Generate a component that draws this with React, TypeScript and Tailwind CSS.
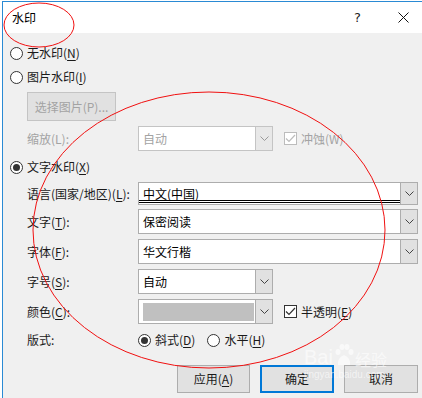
import React from "react";

const font = "font-['Noto_Sans_CJK_SC',sans-serif]";

function Chevron({ color = "#444" }: { color?: string }) {
    return (
        <svg width="9" height="5" viewBox="0 0 9 5">
            <path d="M0.5 0.5 L4.5 4.5 L8.5 0.5" stroke={color} fill="none" strokeWidth="1" />
        </svg>
    );
}

function Radio({ checked }: { checked?: boolean }) {
    return (
        <span className="w-[13px] h-[13px] rounded-full border border-[#333] bg-white flex items-center justify-center shrink-0">
            {checked && <span className="w-[7px] h-[7px] rounded-full bg-[#333]" />}
        </span>
    );
}

function Check({ disabled }: { disabled?: boolean }) {
    const c = disabled ? "#bcbcbc" : "#333";
    return (
        <span className={`w-[13px] h-[13px] border bg-white flex items-center justify-center shrink-0 ${disabled ? "border-[#bcbcbc]" : "border-[#333]"}`}>
            <svg width="11" height="9" viewBox="0 0 11 9">
                <path d="M1 4.5 L4 7.5 L10 1" stroke={c} fill="none" strokeWidth="1.2" />
            </svg>
        </span>
    );
}

function Combo({ w, h = 25, disabled, children }: { w: string; h?: number; disabled?: boolean; children?: React.ReactNode }) {
    return (
        <div
            className={`${w} flex border ${disabled ? "border-[#c4c4c4]" : "border-[#adadad]"} bg-white`}
            style={{ height: h }}
        >
            <div className="flex-1 relative flex items-center pl-[4px]">{children}</div>
            <div className={`w-[17px] border-l ${disabled ? "border-[#c4c4c4] bg-[#e8e8e8]" : "border-[#adadad] bg-[#e1e1e1]"} flex items-center justify-center`}>
                <Chevron color={disabled ? "#999" : "#444"} />
            </div>
        </div>
    );
}

function Label({ children }: { children: React.ReactNode }) {
    return <div className="w-[111px] text-[12px] leading-none text-[#1a1a1a]">{children}</div>;
}

export default function App() {
    return (
        <div className={`w-[422px] h-[398px] bg-white pl-[2px] pt-[1px] relative overflow-hidden ${font}`}>
            <div className="h-full border-l border-t border-[#2a8ad4] flex flex-col">
                {/* 标题栏 */}
                <div className="h-[31px] bg-white flex items-center pl-[9px] pr-[13px] shrink-0">
                    <span className="text-[12px] leading-none text-black">水印</span>
                    <span className="ml-auto text-[13px] leading-none text-[#222] font-['DejaVu_Sans',sans-serif]">?</span>
                    <svg className="ml-[37px]" width="11" height="11" viewBox="0 0 11 11">
                        <path d="M0.5 0.5 L10.5 10.5 M10.5 0.5 L0.5 10.5" stroke="#111" strokeWidth="1" />
                    </svg>
                </div>

                {/* 内容 */}
                <div className="flex-1 bg-[#f0f0f0] pl-[7px] pt-[8px] text-[12px] leading-none text-[#1a1a1a]">
                    <div className="h-[24px] flex items-center gap-[4px]">
                        <Radio />
                        <span>无水印(<u className="underline-offset-2">N</u>)</span>
                    </div>
                    <div className="h-[24px] flex items-center gap-[4px]">
                        <Radio />
                        <span>图片水印(<u className="underline-offset-2">I</u>)</span>
                    </div>
                    <div className="mt-[3px] ml-[17px] w-[89px] h-[29px] border border-[#c4c4c4] bg-[#e1e1e1] text-[#a3a3a3] flex items-center justify-center">
                        选择图片(P)...
                    </div>
                    <div className="mt-[5px] ml-[17px] h-[25px] flex items-center">
                        <Label><span className="text-[#a3a3a3]">缩放(L):</span></Label>
                        <Combo w="w-[135px]" disabled>
                            <span className="text-[#a3a3a3]">自动</span>
                        </Combo>
                        <div className="ml-[11px] flex items-center gap-[4px] text-[#a3a3a3]">
                            <Check disabled />
                            <span>冲蚀(W)</span>
                        </div>
                    </div>
                    <div className="mt-[4px] h-[24px] flex items-center gap-[4px]">
                        <Radio checked />
                        <span>文字水印(<u className="underline-offset-2">X</u>)</span>
                    </div>
                    <div className="mt-[3px] ml-[17px] h-[23px] flex items-center">
                        <Label>语言(国家/地区)(<u className="underline-offset-2">L</u>):</Label>
                        <Combo w="w-[280px]" h={23}>
                            <span className="text-black">中文(中国)</span>
                            <div className="absolute left-0 right-0 bottom-[1px] h-[3px] border-t border-b border-black" />
                        </Combo>
                    </div>
                    <div className="mt-[4px] ml-[17px] h-[25px] flex items-center">
                        <Label>文字(<u className="underline-offset-2">T</u>):</Label>
                        <Combo w="w-[280px]">
                            <span className="text-black">保密阅读</span>
                        </Combo>
                    </div>
                    <div className="mt-[5px] ml-[17px] h-[25px] flex items-center">
                        <Label>字体(<u className="underline-offset-2">F</u>):</Label>
                        <Combo w="w-[280px]">
                            <span className="text-black">华文行楷</span>
                        </Combo>
                    </div>
                    <div className="mt-[5px] ml-[17px] h-[25px] flex items-center">
                        <Label>字号(<u className="underline-offset-2">S</u>):</Label>
                        <Combo w="w-[135px]">
                            <span className="text-black">自动</span>
                        </Combo>
                    </div>
                    <div className="mt-[5px] ml-[17px] h-[25px] flex items-center">
                        <Label>颜色(<u className="underline-offset-2">C</u>):</Label>
                        <Combo w="w-[135px]">
                            <div className="w-[111px] h-[18px] bg-[#c0c0c0]" />
                        </Combo>
                        <div className="ml-[11px] flex items-center gap-[4px]">
                            <Check />
                            <span>半透明(<u className="underline-offset-2">E</u>)</span>
                        </div>
                    </div>
                    <div className="mt-[6px] ml-[17px] h-[20px] flex items-center">
                        <Label>版式:</Label>
                        <div className="flex items-center gap-[4px]">
                            <Radio checked />
                            <span>斜式(<u className="underline-offset-2">D</u>)</span>
                        </div>
                        <div className="ml-[12px] flex items-center gap-[4px]">
                            <Radio />
                            <span>水平(<u className="underline-offset-2">H</u>)</span>
                        </div>
                    </div>

                    {/* 按钮 */}
                    <div className="mt-[15px] flex justify-end gap-[10px] pr-[4px]">
                        <div className="w-[73px] h-[28px] border border-[#adadad] bg-[#e1e1e1] flex items-center justify-center">
                            应用(<u className="underline-offset-2">A</u>)
                        </div>
                        <div className="w-[74px] h-[28px] border-2 border-[#0078d7] bg-[#e1e1e1] flex items-center justify-center">
                            确定
                        </div>
                        <div className="w-[74px] h-[28px] border border-[#adadad] bg-[#e1e1e1] flex items-center justify-center">
                            取消
                        </div>
                    </div>
                </div>
            </div>

            {/* 百度经验水印 */}
            <div className="absolute left-[304px] top-[343px] text-white/60 pointer-events-none flex flex-col items-start">
                <div className="flex items-end gap-[1px]">
                    <span className="text-[20px] leading-none font-['Liberation_Sans',sans-serif]">Bai</span>
                    <svg width="20" height="24" viewBox="0 0 20 24">
                        <g fill="rgba(255,255,255,0.6)">
                            <ellipse cx="4" cy="9" rx="2.5" ry="3" />
                            <ellipse cx="8" cy="4" rx="2.5" ry="3" />
                            <ellipse cx="13" cy="4" rx="2.5" ry="3" />
                            <ellipse cx="17" cy="9" rx="2.5" ry="3" />
                            <path d="M4 22 Q3 15 10 12 Q17 15 16 22 Z" />
                        </g>
                    </svg>
                    <span className="text-[16px] leading-none">经验</span>
                </div>
                <span className="text-[10px] leading-none mt-[3px] font-['Liberation_Sans',sans-serif]">jingyan.baidu.com</span>
            </div>

            {/* 红色圈注 */}
            <svg className="absolute inset-0 pointer-events-none" width="422" height="398" viewBox="0 0 422 398">
                <ellipse cx="39" cy="25" rx="35" ry="22" fill="none" stroke="#f01010" strokeWidth="1" />
                <ellipse cx="209" cy="230" rx="176" ry="138" fill="none" stroke="#f01010" strokeWidth="1" />
            </svg>
        </div>
    );
}
